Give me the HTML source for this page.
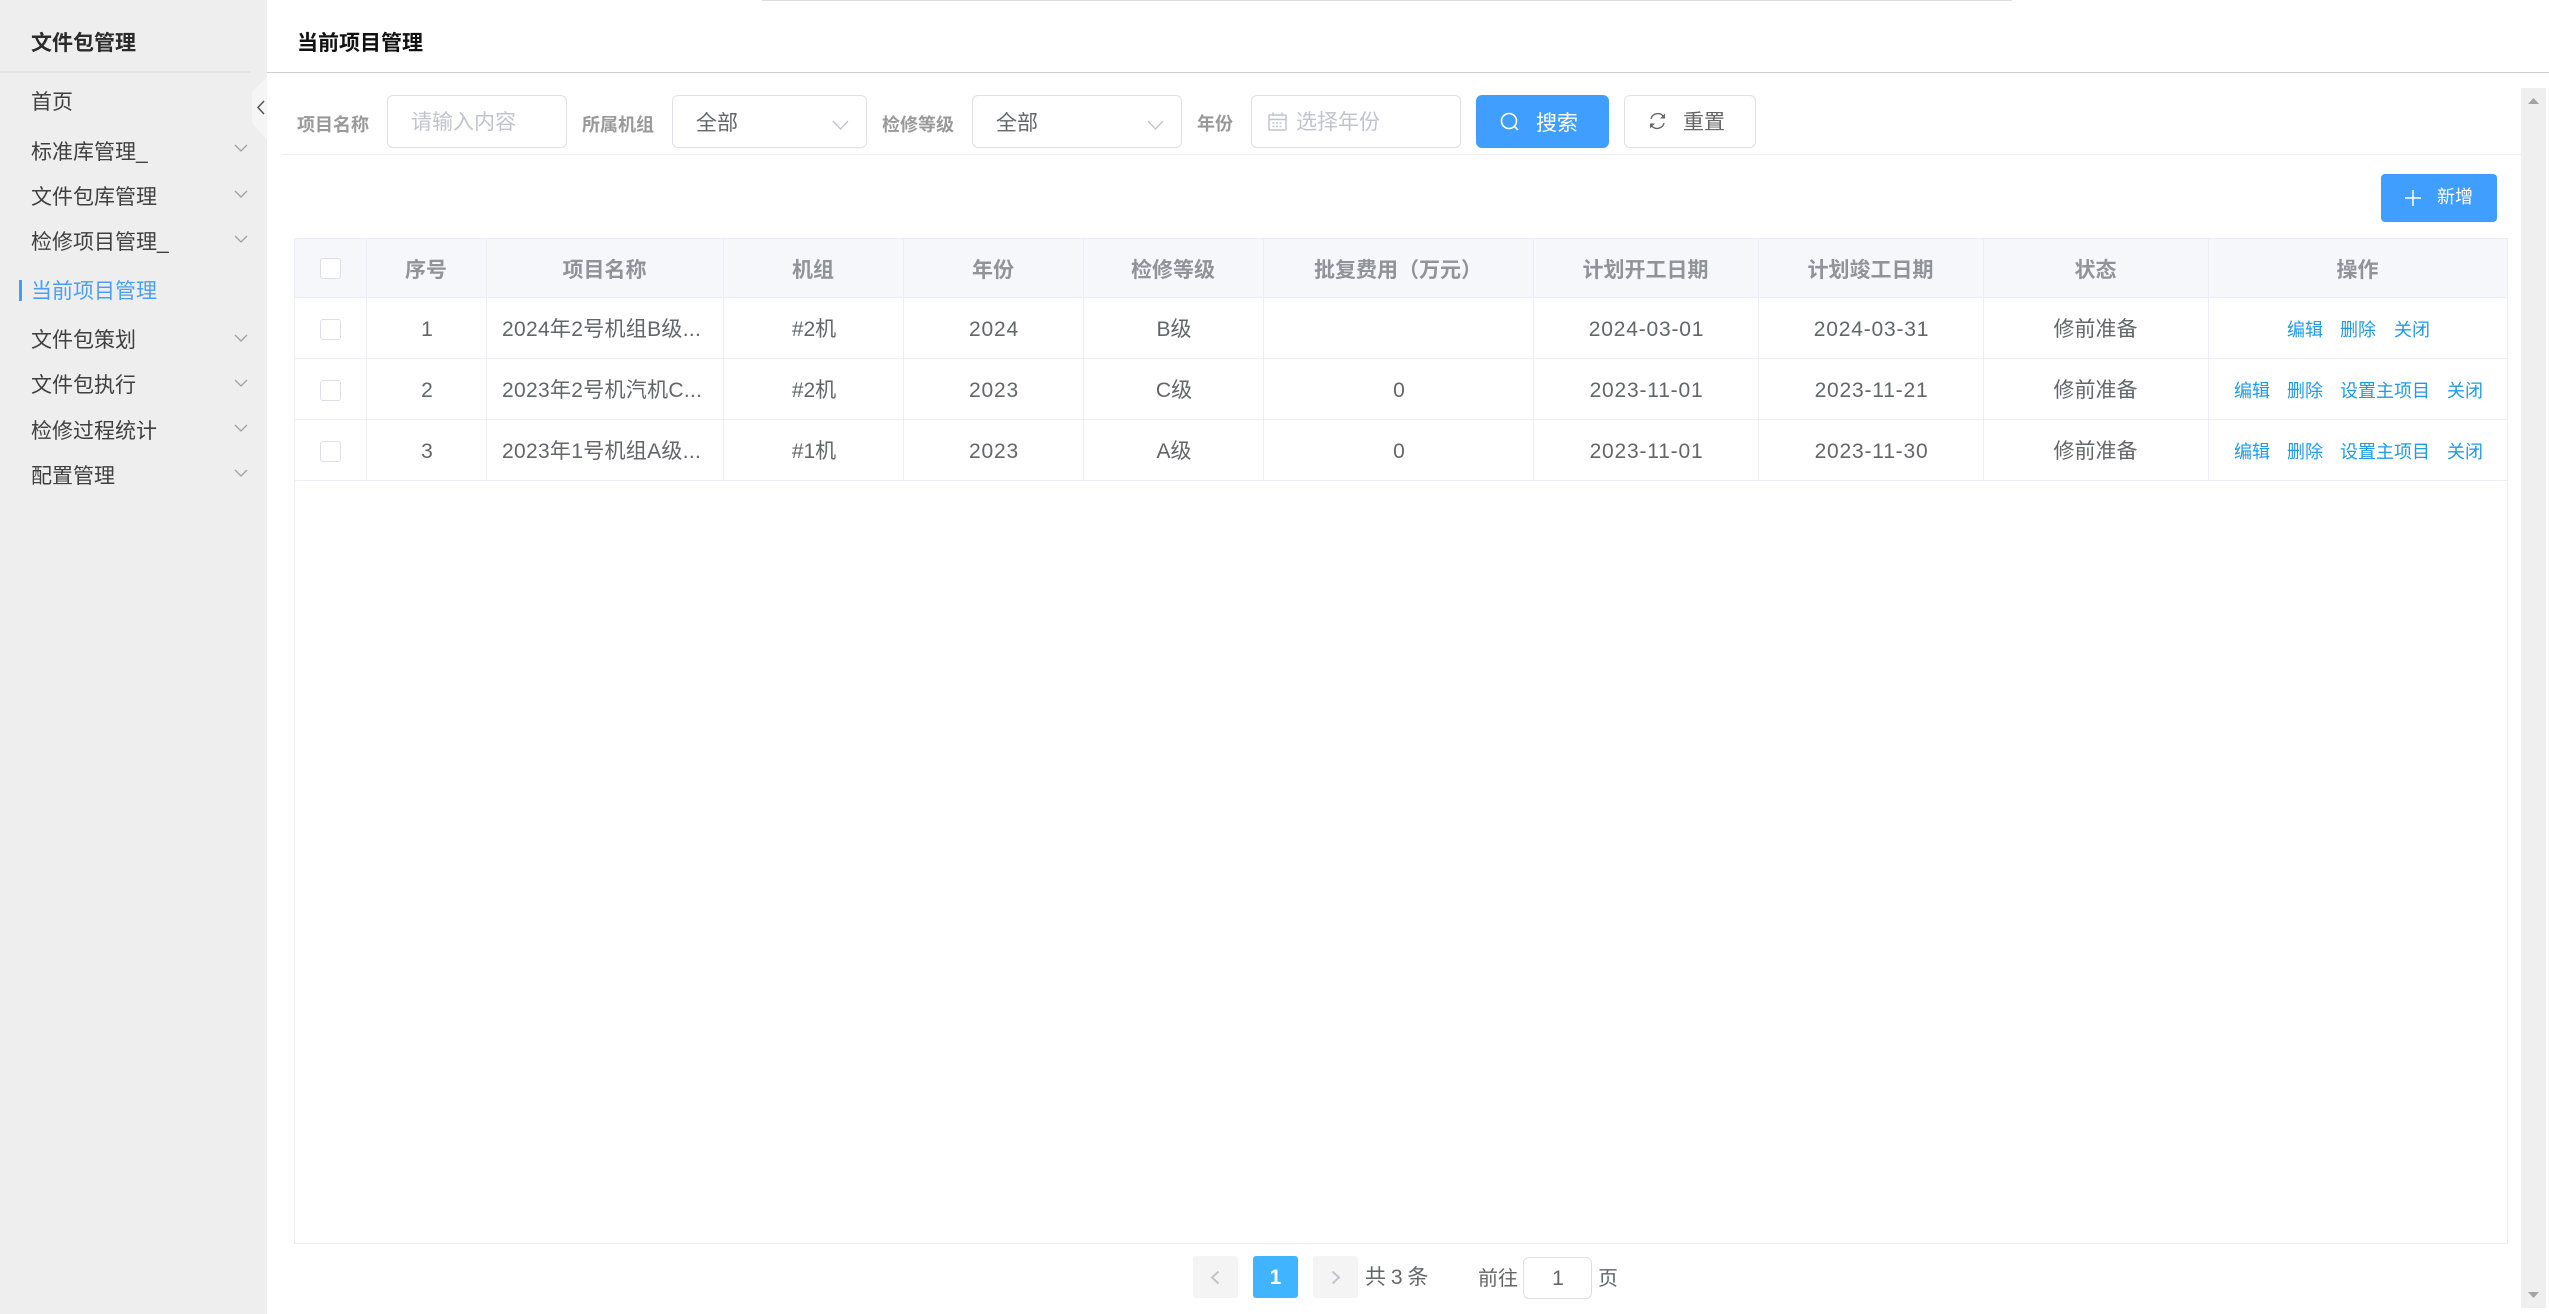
<!DOCTYPE html>
<html lang="zh-CN">
<head>
<meta charset="utf-8">
<title>当前项目管理</title>
<style>
*{box-sizing:border-box;margin:0;padding:0}
html,body{width:2549px;height:1314px;overflow:hidden;background:#fff}
body{position:relative;font-family:"Liberation Sans","Noto Sans CJK SC",sans-serif;font-size:21px;color:#636568}
.a{position:absolute}
.t{position:absolute;height:30px;line-height:30px;white-space:nowrap}
.m{left:31px;color:#3f3f3f;font-size:21px}
.l{color:#999;font-size:18px;font-weight:700}
.box{position:absolute;top:95px;height:53px;background:#fff;border:1px solid #dfe1e6;border-radius:6px}
.ph{color:#c0c4cc}
.cell{position:absolute;height:30px;line-height:30px;text-align:center;white-space:nowrap}
.th{font-weight:700;color:#909399;top:256px}
.d{letter-spacing:.8px;margin-left:1px}
.n{letter-spacing:.3px}
.cb{position:absolute;left:320px;width:21px;height:21px;background:#fff;border:1px solid #dcdfe6;border-radius:3px}
.v{position:absolute;width:1px;background:#ebeef5}
.h{position:absolute;left:294px;width:2214px;height:1px;background:#ebeef5}
.op{position:absolute;height:26px;line-height:26px;font-size:18px;color:#1f9be6;white-space:nowrap}
svg{position:absolute;overflow:visible}
.btnp{position:absolute;background:#f4f4f5;border-radius:3px;top:1256px;width:45px;height:42px}
</style>
</head>
<body>
<!-- sidebar -->
<div class="a" style="left:0;top:0;width:267px;height:1314px;background:#eeeeee"></div>
<div class="a" style="left:0;top:71px;width:250px;height:2px;background:#e2e2e2"></div>
<div class="t" style="left:31px;top:29px;font-weight:700;color:#2b2b2b">文件包管理</div>

<svg style="left:252px;top:77px" width="15" height="63"><polygon points="15,0 15,63 0,46 0,15" fill="#f5f5f5"/></svg>
<svg style="left:257px;top:100px" width="8" height="15"><path d="M7 1 L1 7.500 L7 14" fill="none" stroke="#555" stroke-width="1.500"/></svg>

<div class="t m" style="top:88px">首页</div>
<div class="t m" style="top:138px">标准库管理_</div>
<div class="t m" style="top:183px">文件包库管理</div>
<div class="t m" style="top:228px">检修项目管理_</div>
<div class="a" style="left:19px;top:280px;width:3px;height:21px;background:#409eff"></div>
<div class="t m" style="top:277px;color:#4a9ff2">当前项目管理</div>
<div class="t m" style="top:326px">文件包策划</div>
<div class="t m" style="top:371px">文件包执行</div>
<div class="t m" style="top:417px">检修过程统计</div>
<div class="t m" style="top:462px">配置管理</div>

<svg style="left:234px;top:144px" width="14" height="8"><path d="M1 1 L7 7 L13 1" fill="none" stroke="#a0a0a0" stroke-width="1.300"/></svg>
<svg style="left:234px;top:190px" width="14" height="8"><path d="M1 1 L7 7 L13 1" fill="none" stroke="#a0a0a0" stroke-width="1.300"/></svg>
<svg style="left:234px;top:235px" width="14" height="8"><path d="M1 1 L7 7 L13 1" fill="none" stroke="#a0a0a0" stroke-width="1.300"/></svg>
<svg style="left:234px;top:334px" width="14" height="8"><path d="M1 1 L7 7 L13 1" fill="none" stroke="#a0a0a0" stroke-width="1.300"/></svg>
<svg style="left:234px;top:379px" width="14" height="8"><path d="M1 1 L7 7 L13 1" fill="none" stroke="#a0a0a0" stroke-width="1.300"/></svg>
<svg style="left:234px;top:424px" width="14" height="8"><path d="M1 1 L7 7 L13 1" fill="none" stroke="#a0a0a0" stroke-width="1.300"/></svg>
<svg style="left:234px;top:469px" width="14" height="8"><path d="M1 1 L7 7 L13 1" fill="none" stroke="#a0a0a0" stroke-width="1.300"/></svg>

<!-- top -->
<div class="a" style="left:762px;top:0;width:1250px;height:1px;background:#dedede"></div>
<div class="a" style="left:267px;top:72px;width:2282px;height:1px;background:#cfcfcf"></div>
<div class="t" style="left:297px;top:29px;font-weight:700;color:#111">当前项目管理</div>

<!-- filter -->
<div class="t l" style="left:297px;top:110px">项目名称</div>
<div class="box" style="left:387px;width:180px"></div>
<div class="t ph" style="left:411px;top:108px">请输入内容</div>

<div class="t l" style="left:582px;top:110px">所属机组</div>
<div class="box" style="left:672px;width:195px"></div>
<div class="t" style="left:696px;top:109px">全部</div>
<svg style="left:832px;top:120px" width="17" height="10"><path d="M1 1 L8.500 9 L16 1" fill="none" stroke="#c0c4cc" stroke-width="1.300"/></svg>

<div class="t l" style="left:882px;top:110px">检修等级</div>
<div class="box" style="left:972px;width:210px"></div>
<div class="t" style="left:996px;top:109px">全部</div>
<svg style="left:1147px;top:120px" width="17" height="10"><path d="M1 1 L8.500 9 L16 1" fill="none" stroke="#c0c4cc" stroke-width="1.300"/></svg>

<div class="t l" style="left:1197px;top:109px">年份</div>
<div class="box" style="left:1251px;width:210px"></div>
<svg style="left:1268px;top:112px" width="19" height="19" viewBox="0 0 19 19"><g fill="none" stroke="#c0c4cc" stroke-width="1.500"><rect x="1" y="3" width="17" height="15" rx="1"/><path d="M1 7.500H18M5 0.500V4M14 0.500V4"/><path d="M4.500 11H14.500M4.500 14.500H14.500" stroke-dasharray="2 1.500"/></g></svg>
<div class="t ph" style="left:1296px;top:108px">选择年份</div>

<div class="a" style="left:1476px;top:95px;width:133px;height:53px;background:#409eff;border-radius:6px"></div>
<svg style="left:1500px;top:112px" width="20" height="20" viewBox="0 0 20 20"><circle cx="9" cy="9" r="7.500" fill="none" stroke="#fff" stroke-width="1.600"/><path d="M14.500 14.500L18 18" stroke="#fff" stroke-width="1.600"/></svg>
<div class="t" style="left:1536px;top:109px;color:#fff">搜索</div>

<div class="a" style="left:1624px;top:95px;width:132px;height:53px;background:#fff;border:1px solid #dfe1e6;border-radius:6px"></div>
<svg style="left:1649px;top:112px" width="17" height="18" viewBox="0 0 17 18"><g fill="none" stroke="#666" stroke-width="1.400"><path d="M14.500 4.500A7 7 0 0 0 2 7"/><path d="M2.500 13.500A7 7 0 0 0 15 11"/></g><path d="M16 1.500V6.500H11Z" fill="#666"/><path d="M1 16.500V11.500H6Z" fill="#666"/></svg>
<div class="t" style="left:1683px;top:108px;color:#666">重置</div>

<div class="a" style="left:282px;top:154px;width:2239px;height:1px;background:#efefef"></div>

<!-- scrollbar -->
<div class="a" style="left:2521px;top:88px;width:25px;height:1220px;background:#efefef"></div>
<svg style="left:2528px;top:98px" width="11" height="6"><polygon points="5.500,0 11,6 0,6" fill="#a3a3a3"/></svg>
<svg style="left:2528px;top:1292px" width="11" height="6"><polygon points="0,0 11,0 5.500,6" fill="#a3a3a3"/></svg>

<!-- add -->
<div class="a" style="left:2381px;top:174px;width:116px;height:48px;background:#409eff;border-radius:4px"></div>
<svg style="left:2405px;top:190px" width="16" height="16"><path d="M8 0V16M0 8H16" stroke="#fff" stroke-width="1.500"/></svg>
<div class="t" style="left:2437px;top:182px;color:#fff;font-size:18px">新增</div>

<!-- table -->
<div class="a" style="left:294px;top:238px;width:2214px;height:1006px;border:1px solid #ebeef5"></div>
<div class="a" style="left:294px;top:238px;width:2214px;height:60px;background:#f5f7fa;border:1px solid #ebeef5"></div>
<div class="h" style="top:297px"></div>
<div class="h" style="top:358px"></div>
<div class="h" style="top:419px"></div>
<div class="h" style="top:480px"></div>
<div class="v" style="left:366px;top:238px;height:243px"></div>
<div class="v" style="left:486px;top:238px;height:243px"></div>
<div class="v" style="left:723px;top:238px;height:243px"></div>
<div class="v" style="left:903px;top:238px;height:243px"></div>
<div class="v" style="left:1083px;top:238px;height:243px"></div>
<div class="v" style="left:1263px;top:238px;height:243px"></div>
<div class="v" style="left:1533px;top:238px;height:243px"></div>
<div class="v" style="left:1758px;top:238px;height:243px"></div>
<div class="v" style="left:1983px;top:238px;height:243px"></div>
<div class="v" style="left:2208px;top:238px;height:243px"></div>

<div class="cb" style="top:258px"></div>
<div class="cb" style="top:319px"></div>
<div class="cb" style="top:380px"></div>
<div class="cb" style="top:441px"></div>

<div class="cell th" style="left:366px;width:120px">序号</div>
<div class="cell th" style="left:486px;width:237px">项目名称</div>
<div class="cell th" style="left:723px;width:180px">机组</div>
<div class="cell th" style="left:903px;width:180px">年份</div>
<div class="cell th" style="left:1083px;width:180px">检修等级</div>
<div class="cell th" style="left:1263px;width:270px">批复费用（万元）</div>
<div class="cell th" style="left:1533px;width:225px">计划开工日期</div>
<div class="cell th" style="left:1758px;width:225px">计划竣工日期</div>
<div class="cell th" style="left:1983px;width:225px">状态</div>
<div class="cell th" style="left:2208px;width:299px">操作</div>

<!-- row 1 -->
<div class="cell" style="left:367px;width:120px;top:315px">1</div>
<div class="t n" style="left:502px;top:315px">2024年2号机组B级...</div>
<div class="cell" style="left:724px;width:180px;top:315px">#2机</div>
<div class="cell d" style="left:903px;width:180px;top:315px">2024</div>
<div class="cell" style="left:1084px;width:180px;top:315px">B级</div>
<div class="cell d" style="left:1533px;width:225px;top:315px">2024-03-01</div>
<div class="cell d" style="left:1758px;width:225px;top:315px">2024-03-31</div>
<div class="cell" style="left:1983px;width:225px;top:315px">修前准备</div>
<div class="op" style="left:2287px;top:317px">编辑</div>
<div class="op" style="left:2340px;top:317px">删除</div>
<div class="op" style="left:2394px;top:317px">关闭</div>

<!-- row 2 -->
<div class="cell" style="left:367px;width:120px;top:376px">2</div>
<div class="t n" style="left:502px;top:376px">2023年2号机汽机C...</div>
<div class="cell" style="left:724px;width:180px;top:376px">#2机</div>
<div class="cell d" style="left:903px;width:180px;top:376px">2023</div>
<div class="cell" style="left:1084px;width:180px;top:376px">C级</div>
<div class="cell" style="left:1264px;width:270px;top:376px">0</div>
<div class="cell d" style="left:1533px;width:225px;top:376px">2023-11-01</div>
<div class="cell d" style="left:1758px;width:225px;top:376px">2023-11-21</div>
<div class="cell" style="left:1983px;width:225px;top:376px">修前准备</div>
<div class="op" style="left:2234px;top:378px">编辑</div>
<div class="op" style="left:2287px;top:378px">删除</div>
<div class="op" style="left:2340px;top:378px">设置主项目</div>
<div class="op" style="left:2447px;top:378px">关闭</div>

<!-- row 3 -->
<div class="cell" style="left:367px;width:120px;top:437px">3</div>
<div class="t n" style="left:502px;top:437px">2023年1号机组A级...</div>
<div class="cell" style="left:724px;width:180px;top:437px">#1机</div>
<div class="cell d" style="left:903px;width:180px;top:437px">2023</div>
<div class="cell" style="left:1084px;width:180px;top:437px">A级</div>
<div class="cell" style="left:1264px;width:270px;top:437px">0</div>
<div class="cell d" style="left:1533px;width:225px;top:437px">2023-11-01</div>
<div class="cell d" style="left:1758px;width:225px;top:437px">2023-11-30</div>
<div class="cell" style="left:1983px;width:225px;top:437px">修前准备</div>
<div class="op" style="left:2234px;top:439px">编辑</div>
<div class="op" style="left:2287px;top:439px">删除</div>
<div class="op" style="left:2340px;top:439px">设置主项目</div>
<div class="op" style="left:2447px;top:439px">关闭</div>

<!-- pagination -->
<div class="btnp" style="left:1193px"></div>
<svg style="left:1210px;top:1270px" width="10" height="15"><path d="M8.500 1.500L2 7.500L8.500 13.500" fill="none" stroke="#c0c4cc" stroke-width="2"/></svg>
<div class="btnp" style="left:1253px;background:#40b4ff;color:#fff;font-weight:700;text-align:center;line-height:44px">1</div>
<div class="btnp" style="left:1313px"></div>
<svg style="left:1331px;top:1270px" width="10" height="15"><path d="M1.500 1.500L8 7.500L1.500 13.500" fill="none" stroke="#c0c4cc" stroke-width="2"/></svg>
<div class="t" style="left:1365px;top:1263px;word-spacing:-1px">共 3 条</div>
<div class="t" style="left:1478px;top:1264px;font-size:20px">前往</div>
<div class="a" style="left:1523px;top:1257px;width:69px;height:42px;background:#fff;border:1px solid #dcdfe6;border-radius:6px;text-align:center;line-height:41px;padding-left:1px">1</div>
<div class="t" style="left:1598px;top:1264px;font-size:20px">页</div>
</body>
</html>
